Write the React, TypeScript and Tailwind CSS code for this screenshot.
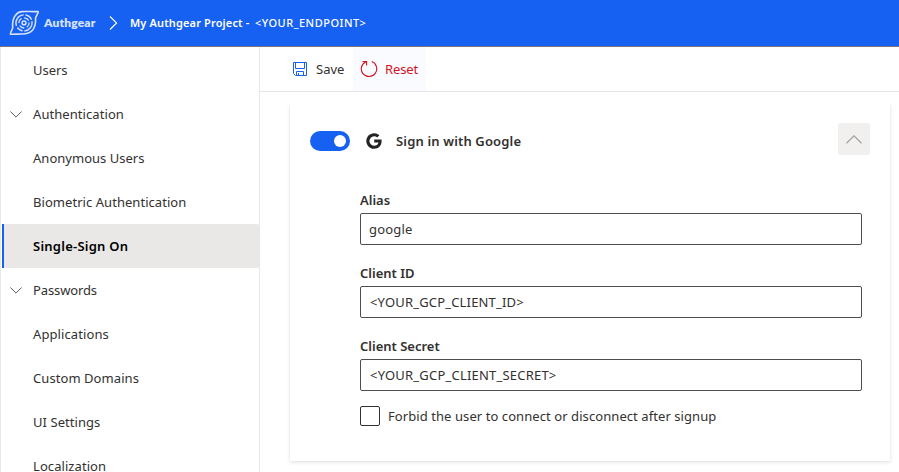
import React from "react";

type NavItem = { label: string; tracking: string; expandable?: boolean; selected?: boolean };

const navItems: NavItem[] = [
  { label: "Users", tracking: "tracking-[-0.05px]" },
  { label: "Authentication", tracking: "tracking-[0.07px]", expandable: true },
  { label: "Anonymous Users", tracking: "tracking-[0.02px]" },
  { label: "Biometric Authentication", tracking: "tracking-[0.05px]" },
  { label: "Single-Sign On", tracking: "tracking-[0.24px]", selected: true },
  { label: "Passwords", tracking: "tracking-[-0.12px]", expandable: true },
  { label: "Applications", tracking: "tracking-[0.1px]" },
  { label: "Custom Domains", tracking: "tracking-[0.07px]" },
  { label: "UI Settings", tracking: "tracking-[0.05px]" },
  { label: "Localization", tracking: "tracking-[0.07px]" },
];

function Logo() {
  return (
    <svg width="30" height="26" viewBox="0 0 30 26" fill="none" stroke="#d5e1fd" strokeLinecap="round" strokeLinejoin="round">
      <path d="M12.5 1.6C18 1.1 24 2 29.2 1.5C29.2 4.4 26.9 5.6 26.6 8C26.8 12.5 26.3 17 23.5 20.3C20.8 23.3 17.2 24 13 24C9 24 5 24.3 1.4 24.2C1.4 21.4 3.6 20 3.7 17.5C3.3 13 3.6 9 6.3 5.6C7.8 3.4 9.8 1.9 12.5 1.6Z" strokeWidth="1.6" />
      <path d="M7.3 15.4A8.1 8.1 0 0 1 14.2 4.9M17 5A8.1 8.1 0 0 1 22.4 9.2M23 11.6A8.1 8.1 0 0 1 15.8 20.9M13 20.7A8.1 8.1 0 0 1 8.6 18" strokeWidth="1.4" />
      <circle cx="15" cy="12.9" r="5.1" strokeWidth="1.3" strokeDasharray="4.4 3.6" />
      <circle cx="15" cy="12.9" r="1.9" strokeWidth="1.5" />
    </svg>
  );
}

function Chevron() {
  return (
    <svg width="12" height="7" viewBox="0 0 12 7" fill="none" stroke="#605e5c" strokeWidth="1">
      <path d="M.4 .5L6 6.1L11.6 .5" />
    </svg>
  );
}

function SaveIcon() {
  return (
    <svg width="14" height="14" viewBox="0 0 14 14" fill="none" stroke="#1761f2" strokeWidth="1">
      <path d="M.5 .5H13.5V13.5H2.5L.5 11.5Z M2.5 .5V6.5H11.5V.5 M3.5 13V9.5H10.5V13.5 M5.5 11V13.5" />
    </svg>
  );
}

function ResetIcon() {
  return (
    <svg width="18" height="18" viewBox="0 0 18 18" fill="none" stroke="#d6121f" strokeWidth="1.1">
      <path d="M11.8 1.6A7.7 7.7 0 1 1 6 1.7" />
      <path d="M2.6 1.5H6.6V5.6" />
    </svg>
  );
}

function GoogleIcon() {
  return (
    <svg width="16" height="16" viewBox="0 0 16 16" fill="#242424">
      <path d="M8.2 6.6V9.4H12.5C12.1 11.4 10.5 12.7 8.2 12.7A4.7 4.7 0 1 1 11.2 4.4L13.4 2.3A7.8 7.8 0 1 0 8.2 15.8C12.7 15.8 15.6 12.7 15.6 8.1C15.6 7.6 15.6 7.1 15.5 6.6Z" />
    </svg>
  );
}

type FieldProps = { label: string; value: string; valueTracking: string; inset: string };

function Field({ label, value, valueTracking, inset }: FieldProps) {
  return (
    <div className="mb-2.5 flex h-[63px] flex-col">
      <label className="h-[31px] pt-2 text-[13px] leading-5 font-semibold">{label}</label>
      <div className={`flex h-8 items-center rounded-xs border border-[#504e4c] pt-0.5 ${inset}`}>
        <span className={valueTracking}>{value}</span>
      </div>
    </div>
  );
}

export default function App() {
  return (
    <div className="flex h-[472px] w-[899px] flex-col overflow-hidden bg-white font-['Noto_Sans',sans-serif] text-[13px] whitespace-nowrap text-[#323130]">
      <header className="flex h-[47px] shrink-0 items-center border-b border-[#767676] bg-[#1761f2] text-white">
        <div className="flex w-[109px] items-center pl-[9px]">
          <Logo />
          <span className="ml-[5px] font-['Lato',sans-serif] text-[12px] font-extrabold tracking-[0.15px] text-[#d5e1fd]">Authgear</span>
        </div>
        <svg width="9" height="14" viewBox="0 0 9 14" fill="none" stroke="white" strokeWidth="1.1">
          <path d="M1 .5L7.6 7L1 13.5" />
        </svg>
        <span className="ml-3 w-[125px] text-[11px] font-semibold tracking-[0.14px]">My Authgear Project -</span>
        <span className="text-[11px] font-medium tracking-[0.5px]">&lt;YOUR_ENDPOINT&gt;</span>
      </header>
      <div className="flex min-h-0 flex-1">
        <nav className="w-[260px] shrink-0 overflow-hidden border-x border-[#e8e8e8] pt-px">
          {navItems.map((item) => (
            <div
              key={item.label}
              className={`flex h-11 items-center ${item.selected ? "ml-px rounded-r-xs border-l-2 border-[#1761f2] bg-[#e9e8e7] font-semibold text-black" : "pl-[3px]"}`}
            >
              <span className="w-[29px] shrink-0 pl-1.5">{item.expandable && <Chevron />}</span>
              <span className={`pt-0.5 ${item.tracking}`}>{item.label}</span>
            </div>
          ))}
        </nav>
        <main className="min-w-0 flex-1">
          <div className="flex h-[45px] items-center border-b border-[#e5e5e5] pl-[33px]">
            <SaveIcon />
            <span className="ml-[9px] w-[37px] pt-0.5">Save</span>
            <div className="flex h-11 w-[73px] items-center bg-[#f9fbff] pl-[7px] text-[#d6121f]">
              <ResetIcon />
              <span className="ml-[7px] pt-0.5 tracking-[-0.1px]">Reset</span>
            </div>
          </div>
          <section className="mt-[11px] ml-[30px] h-[358px] w-[600px] bg-white pt-5 shadow-[0_1.6px_3.6px_rgba(0,0,0,0.13),0_0.3px_0.9px_rgba(0,0,0,0.11)]">
            <div className="flex h-8 items-center px-5">
              <div className="mt-1 flex h-5 w-10 items-center justify-end rounded-full bg-[#1761f2] pr-1">
                <div className="size-3 rounded-full bg-white" />
              </div>
              <div className="mt-1 ml-4">
                <GoogleIcon />
              </div>
              <span className="mt-1.5 ml-3.5 font-semibold tracking-[0.15px]">Sign in with Google</span>
              <div className="ml-auto flex size-8 items-center justify-center rounded-xs bg-[#f1f0ef]">
                <svg width="16" height="9" viewBox="0 0 16 9" fill="none" stroke="#a19f9d" strokeWidth="1.2">
                  <path d="M.5 8.2L8 .9L15.5 8.2" />
                </svg>
              </div>
            </div>
            <div className="mr-7 ml-[70px] pt-[27px]">
              <Field label="Alias" value="google" valueTracking="tracking-[0.2px]" inset="pl-2" />
              <Field label="Client ID" value="<YOUR_GCP_CLIENT_ID>" valueTracking="tracking-[0.18px]" inset="pl-[9px]" />
              <Field label="Client Secret" value="<YOUR_GCP_CLIENT_SECRET>" valueTracking="tracking-[0.21px]" inset="pl-[9px]" />
              <div className="mt-[15px] flex h-5 items-center">
                <div className="size-5 rounded-xs border border-[#323130]" />
                <span className="ml-2 pt-px tracking-[0.075px]">Forbid the user to connect or disconnect after signup</span>
              </div>
            </div>
          </section>
        </main>
      </div>
    </div>
  );
}
